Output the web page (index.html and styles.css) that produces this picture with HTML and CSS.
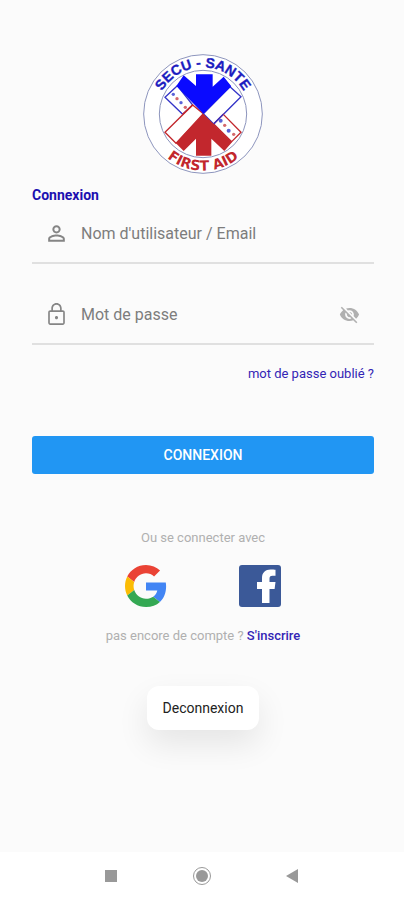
FILE: index.html
```
<!DOCTYPE html>
<html lang="fr">
<head>
    <meta charset="UTF-8">
    <meta name="viewport" content="width=device-width, initial-scale=1.0">
    <title>Secu-Sante - Connexion</title>
    <link rel="stylesheet" href="styles.css">
</head>
<body>
    <main>
        <svg class="logo" viewBox="0 0 360 360" role="img" aria-label="Secu-Sante First Aid">
            <defs>
                <path id="arcTop" d="M40 180 A140 140 0 0 1 320 180"/>
                <path id="arcBottom" d="M10 180 A170 170 0 0 0 350 180"/>
            </defs>
            <circle cx="180" cy="180" r="178" fill="#fff" stroke="#8d95bd" stroke-width="3"/>
            <circle cx="180" cy="180" r="131" fill="#fff" stroke="#8d95bd" stroke-width="3"/>
            <!-- bands -->
            <g fill="#fff" stroke-width="4">
                <path d="M103 95 L66 130 L119 181 L149 153 Z" stroke="#3434c8"/>
                <path d="M149 153 L181 179 L99 268 L66 235 Z" stroke="#c2272d"/>
                <path d="M261 98 L294 128 L212 210 L181 179 Z" stroke="#3434c8"/>
                <path d="M212 210 L241 181 L294 235 L266 263 Z" stroke="#c2272d"/>
                <path d="M119 181 L149 153" stroke="#c2272d"/>
                <path d="M212 210 L241 181" stroke="#3434c8"/>
            </g>
            <!-- arrows -->
            <path fill="#0a0aff" d="M159 61 H209 V98 L242 68 L265 97 L181 179 L100 96 L122 64 L159 96 Z"/>
            <path fill="#c2272d" d="M181 179 L267 265 L244 291 L205 254 V305 H159 V254 L122 291 L98 267 Z"/>
            <g fill="#5a62d8">
                <circle cx="91" cy="121" r="5"/>
                <circle cx="114" cy="146" r="5"/>
                <circle cx="233" cy="200" r="6"/>
                <circle cx="257" cy="230" r="6"/>
            </g>
            <g fill="#d4686c">
                <circle cx="102" cy="134" r="5"/>
                <circle cx="127" cy="160" r="5"/>
                <circle cx="245" cy="214" r="5"/>
                <circle cx="272" cy="241" r="5"/>
            </g>
            <text class="logo-top"><textPath href="#arcTop" startOffset="50%">SECU - SANTE</textPath></text>
            <text class="logo-bottom"><textPath href="#arcBottom" startOffset="50%">FIRST AID</textPath></text>
        </svg>

        <form>
            <h1>Connexion</h1>
            <div class="field">
                <label for="login">
                    <svg class="icon" viewBox="0 0 24 24" role="img" aria-label="Utilisateur"><path d="M12 5.9a2.1 2.1 0 1 1 0 4.2 2.1 2.1 0 0 1 0-4.2m0 9c2.97 0 6.1 1.46 6.1 2.1v1.1H5.9V17c0-.64 3.13-2.1 6.1-2.1M12 4C9.79 4 8 5.79 8 8s1.79 4 4 4 4-1.79 4-4-1.79-4-4-4zm0 9c-2.67 0-8 1.34-8 4v3h16v-3c0-2.66-5.33-4-8-4z"/></svg>
                </label>
                <input type="text" id="login" name="login" placeholder="Nom d'utilisateur / Email">
            </div>
            <div class="field">
                <label for="password">
                    <svg class="icon" viewBox="0 0 24 24" role="img" aria-label="Mot de passe"><path d="M12 16.500c.83 0 1.500-.67 1.500-1.500s-.67-1.500-1.500-1.500-1.500.67-1.500 1.500.67 1.500 1.500 1.500zM18 8h-1V6c0-2.760-2.240-5-5-5S7 3.240 7 6v2H6c-1.100 0-2 .9-2 2v10c0 1.100.9 2 2 2h12c1.100 0 2-.9 2-2V10c0-1.100-.9-2-2-2zM8.600 6c0-1.870 1.530-3.400 3.400-3.400s3.400 1.530 3.400 3.400v2H8.600V6zM18.400 20.400H5.600V9.600h12.800v10.800z"/></svg>
                </label>
                <input type="password" id="password" name="password" placeholder="Mot de passe">
                <button type="button" class="toggle" aria-label="Afficher le mot de passe">
                    <svg viewBox="0 0 24 24"><path d="M12 7c2.76 0 5 2.24 5 5 0 .65-.13 1.26-.36 1.83l2.92 2.92c1.51-1.26 2.7-2.89 3.43-4.75-1.73-4.39-6-7.5-11-7.5-1.4 0-2.74.25-3.98.7l2.16 2.16C10.74 7.13 11.35 7 12 7zM2 4.27l2.28 2.28.46.46C3.08 8.3 1.78 10.02 1 12c1.73 4.39 6 7.5 11 7.5 1.55 0 3.03-.3 4.38-.84l.42.42L19.73 22 21 20.73 3.27 3 2 4.27zM7.53 9.8l1.55 1.55c-.05.21-.08.43-.08.65 0 1.66 1.34 3 3 3 .22 0 .44-.03.65-.08l1.55 1.55c-.67.33-1.41.53-2.2.53-2.76 0-5-2.24-5-5 0-.79.2-1.53.53-2.2zm4.31-.78l3.15 3.15.02-.16c0-1.66-1.34-3-3-3l-.17.01z"/></svg>
                </button>
            </div>
            <a class="forgot" href="#oubli">mot de passe oublié ?</a>
            <button type="submit" class="submit">CONNEXION</button>
        </form>

        <p class="hint">Ou se connecter avec</p>
        <div class="social">
            <button type="button" aria-label="Google">
                <svg viewBox="0 0 48 48">
                    <path fill="#ea4335" d="M24 9.5c3.54 0 6.71 1.22 9.21 3.6l6.85-6.85C35.9 2.38 30.47 0 24 0 14.62 0 6.51 5.38 2.56 13.22l7.98 6.19C12.43 13.72 17.74 9.5 24 9.5z"/>
                    <path fill="#4285f4" d="M46.98 24.55c0-1.57-.15-3.09-.38-4.55H24v9.02h12.94c-.58 2.96-2.26 5.48-4.78 7.18l7.73 6c4.51-4.18 7.09-10.36 7.09-17.65z"/>
                    <path fill="#fbbc05" d="M10.53 28.59c-.48-1.45-.76-2.99-.76-4.59s.27-3.14.76-4.59l-7.98-6.19C.92 16.46 0 20.12 0 24c0 3.88.92 7.54 2.56 10.78l7.97-6.19z"/>
                    <path fill="#34a853" d="M24 48c6.48 0 11.93-2.13 15.89-5.81l-7.73-6c-2.15 1.45-4.92 2.3-8.16 2.3-6.26 0-11.57-4.22-13.47-9.91l-7.98 6.19C6.51 42.62 14.62 48 24 48z"/>
                </svg>
            </button>
            <button type="button" aria-label="Facebook">
                <svg viewBox="0 0 42 42">
                    <rect width="42" height="42" rx="3" fill="#3b5998"/>
                    <path fill="#fff" d="M23 38V24h-5v-7h5v-4c0-5.500 3.500-8.500 8.500-8.500 2 0 4 .1 5 .3v6h-3c-2.400 0-3 1.200-3 3V17h6l-.9 7h-5.100v14z"/>
                </svg>
            </button>
        </div>
        <p class="hint">pas encore de compte ? <a href="#inscription">S'inscrire</a></p>
        <button type="button" class="logout">Deconnexion</button>
    </main>

    <footer>
        <button type="button" aria-label="Applications">
            <svg viewBox="0 0 20 20"><rect x="4" y="4" width="12" height="12"/></svg>
        </button>
        <button type="button" aria-label="Accueil">
            <svg viewBox="0 0 20 20"><circle cx="10" cy="10" r="6"/><circle cx="10" cy="10" r="8.500" fill="none" stroke="#999"/></svg>
        </button>
        <button type="button" aria-label="Retour">
            <svg viewBox="0 0 20 20"><path d="M3 10 L15 3 V17 Z"/></svg>
        </button>
    </footer>
</body>
</html>
```
FILE: styles.css
```
* {
    box-sizing: border-box;
}

body {
    font-family: Roboto, sans-serif;
    margin: 0;
    min-height: 100vh;
    display: flex;
    flex-direction: column;
    background-color: #fbfbfb;
}

main {
    flex: 1;
    display: flex;
    flex-direction: column;
    align-items: center;
    padding: 54px 30px 24px 32px;
}

button {
    font-family: inherit;
    border: none;
    background: none;
    padding: 0;
    cursor: pointer;
}

svg {
    display: block;
}

a {
    color: #3325b5;
    text-decoration: none;
}

.logo {
    width: 120px;
    height: 120px;
}

.logo text {
    font-weight: bold;
    text-anchor: middle;
}

.logo-top {
    font-family: "Liberation Sans", sans-serif;
    font-size: 42px;
    fill: #1c1cc0;
    stroke: #1c1cc0;
}

.logo-bottom {
    font-family: "DejaVu Sans", sans-serif;
    font-size: 42px;
    fill: #c2272d;
}

form {
    width: 100%;
    display: flex;
    flex-direction: column;
}

h1 {
    margin: 12px 0 0;
    font-size: 14px;
    line-height: 18px;
    color: #1c10b0;
}

.field {
    display: flex;
    align-items: center;
    height: 60px;
    padding: 0 14px 0 12px;
    border-bottom: 2px solid #e0e0e0;
}

.field + .field {
    margin-top: 21px;
}

.icon {
    width: 25px;
    height: 25px;
    fill: #858585;
}

input {
    flex: 1;
    min-width: 0;
    margin-left: 12px;
    padding: 0;
    border: none;
    outline: none;
    background: none;
    font-family: inherit;
    font-size: 16px;
    color: #333;
}

input::placeholder {
    color: #7d7d7d;
    opacity: 1;
}

.toggle svg {
    width: 21px;
    height: 21px;
    fill: #b0b0b0;
}

.forgot {
    align-self: flex-end;
    margin-top: 19px;
    font-size: 13px;
    line-height: 20px;
}

.submit {
    height: 38px;
    margin-top: 52px;
    border-radius: 3px;
    background-color: #2196f3;
    color: #fff;
    font-size: 14px;
    font-weight: 500;
}

.hint {
    margin: 0;
    font-size: 13px;
    line-height: 20px;
    color: #b0b0b0;
}

.hint a {
    font-weight: 500;
}

form + .hint {
    margin-top: 54px;
}

.social {
    display: flex;
    gap: 72px;
    margin: 17px 0 19px;
}

.social svg {
    width: 42px;
    height: 42px;
}

.logout {
    height: 44px;
    margin-top: 40px;
    padding: 0 16px;
    border-radius: 12px;
    background-color: #fff;
    box-shadow: 0 14px 32px rgba(0, 0, 0, 0.09);
    font-size: 14px;
    color: #222;
}

footer {
    display: flex;
    justify-content: center;
    align-items: center;
    gap: 71px;
    height: 48px;
    background-color: #fff;
}

footer svg {
    width: 20px;
    height: 20px;
    fill: #999;
}
```
